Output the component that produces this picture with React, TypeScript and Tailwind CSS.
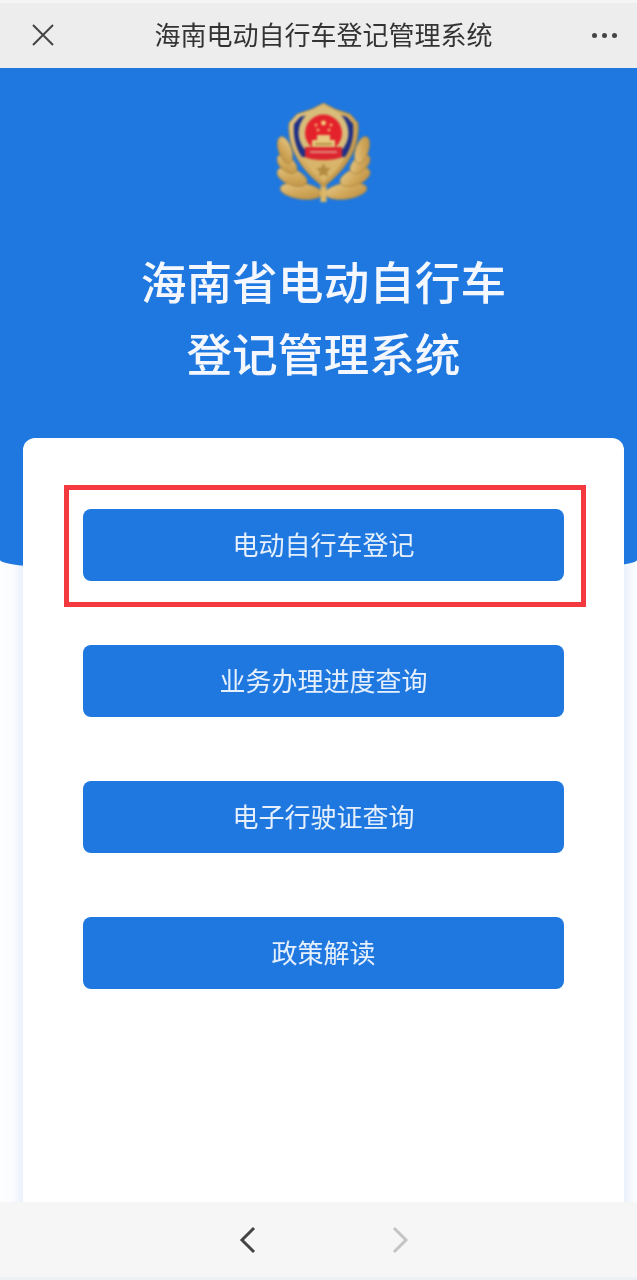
const CJK = "font-['Noto_Sans_CJK_SC','Noto_Sans',sans-serif]";

function Leaf({ x, y, rx, ry, r }: { x: number; y: number; rx: number; ry: number; r: number }) {
  return (
    <ellipse cx={x} cy={y} rx={rx} ry={ry} transform={`rotate(${r} ${x} ${y})`} fill="url(#gold)" stroke="#a5823a" strokeWidth="0.7" />
  );
}

function Emblem() {
  const left = [
    { x: 24, y: 88, rx: 21, ry: 8, r: 8 },
    { x: 15, y: 74, rx: 16, ry: 8, r: 22 },
    { x: 10, y: 61, rx: 12, ry: 7, r: 42 },
    { x: 8, y: 47, rx: 14, ry: 6.5, r: 72 },
  ];
  return (
    <svg width="94" height="100" viewBox="0 0 94 100" className="blur-[0.9px]">
      <defs>
        <linearGradient id="gold" x1="0" y1="0" x2="1" y2="1">
          <stop offset="0" stopColor="#e7cb8a" />
          <stop offset="0.55" stopColor="#d0a659" />
          <stop offset="1" stopColor="#bb8e42" />
        </linearGradient>
      </defs>
      {left.map((l, i) => (
        <Leaf key={i} {...l} />
      ))}
      {left.map((l, i) => (
        <Leaf key={i} x={93 - l.x} y={l.y} rx={l.rx} ry={l.ry} r={-l.r} />
      ))}
      <rect x="43.5" y="82" width="6" height="17" fill="#dcb766" />
      <path d="M46.5 0 L58 6 L73 11 L81 20 C83 46 68 68 46.5 84 C25 68 10 46 12 20 L20 11 L35 6Z" fill="url(#gold)" stroke="#9a7834" strokeWidth="0.8" />
      <path d="M46.5 5 L57 10 L70 14 L76 21 C77 32 75 44 68 54 L25 54 C18 44 16 32 17 21 L23 14 L36 10Z" fill="#1d2f86" />
      <path d="M25 54 L68 54 C63 64 55 72 46.5 79 C38 72 30 64 25 54Z" fill="#d8b56a" />
      <path d="M46.5 60 l2.2 4.5 5 .7 -3.6 3.5 .9 5 -4.5-2.4 -4.5 2.4 .9-5 -3.6-3.5 5-.7Z" fill="#b48a40" />
      <circle cx="46.5" cy="30" r="25" fill="#d8bd7a" />
      <circle cx="46.5" cy="30" r="18.5" fill="#e4222c" />
      <path d="M35 37 h23 v9 h-23z M40 32 h13 v5 h-13z" fill="#e6c97e" />
      <rect x="38" y="40" width="17" height="2" fill="#b58a42" />
      <circle cx="46.5" cy="20" r="2.4" fill="#f3d67c" />
      <circle cx="39" cy="22" r="1.3" fill="#f3d67c" />
      <circle cx="41" cy="27" r="1.3" fill="#f3d67c" />
      <circle cx="52" cy="27" r="1.3" fill="#f3d67c" />
      <circle cx="54" cy="22" r="1.3" fill="#f3d67c" />
      <path d="M28 44 L65 44 L65 54 C58 58 35 58 28 54Z" fill="#dc2530" />
      <path d="M33 49 h27" stroke="#e8b9a0" strokeWidth="1.4" />
    </svg>
  );
}

function ActionButton({ label }: { label: string }) {
  return (
    <button className="flex h-[72px] w-full items-center justify-center rounded-lg bg-[#1f78e0] pb-[4px] text-[26px] text-[#e6f0fc]">
      {label}
    </button>
  );
}

export default function App() {
  return (
    <div className={`${CJK} flex h-[1280px] w-[637px] flex-col overflow-hidden bg-white blur-[0.6px]`}>
      <header className="flex h-[68px] shrink-0 items-center justify-between border-t-[3px] border-[#f4f4f4] bg-[#ededed] pb-[2px] pl-[31px] pr-[20px]">
        <svg width="24" height="24" viewBox="0 0 24 24" stroke="#444" strokeWidth="2" fill="none">
          <path d="M2 2 L22 22 M22 2 L2 22" />
        </svg>
        <span className="mb-[2px] text-[26px] leading-none text-[#333]">海南电动自行车登记管理系统</span>
        <div className="mt-[2px] flex gap-[5px]">
          <i className="size-[5px] rounded-full bg-[#444]" />
          <i className="size-[5px] rounded-full bg-[#444]" />
          <i className="size-[5px] rounded-full bg-[#444]" />
        </div>
      </header>

      <main className="relative min-h-0 flex-1 bg-[linear-gradient(to_right,#fdfeff_0,#fbfcff_12px,#ebf1fb_22px,#ebf1fb_calc(100%-13px),#fdfeff_100%)]">
        <section className="flex h-[507px] flex-col items-center bg-[#1f78e0] pl-[10px] pt-[35px] [border-radius:0_0_50%_50%/0_0_15px_15px]">
          <Emblem />
          <h1 className="mt-[41px] text-center text-[45.7px] leading-[72px] font-medium text-[#f4f8fe]">
            海南省电动自行车
            <br />
            登记管理系统
          </h1>
        </section>

        <section className="relative ml-[23px] mr-[13px] -mt-[137px] h-[800px] rounded-t-xl bg-white px-[60px] pt-[71px]">
          <div className="flex flex-col gap-[64px]">
            <div className="relative">
              <ActionButton label="电动自行车登记" />
              <div className="absolute -left-[19px] -right-[22px] -top-[24px] -bottom-[26px] border-[5px] border-[#f43a3f]" />
            </div>
            <ActionButton label="业务办理进度查询" />
            <ActionButton label="电子行驶证查询" />
            <ActionButton label="政策解读" />
          </div>
        </section>
      </main>

      <footer className="relative flex h-[78px] shrink-0 items-center justify-center gap-[134px] border-b-[3px] border-[#edf0f5] bg-[#f6f6f6] pl-[10px]">
        <svg width="18" height="30" viewBox="0 0 18 30" fill="none" stroke="#444" strokeWidth="3">
          <path d="M15 3 L3 15 L15 27" />
        </svg>
        <svg width="18" height="30" viewBox="0 0 18 30" fill="none" stroke="#c4c4c4" strokeWidth="3">
          <path d="M3 3 L15 15 L3 27" />
        </svg>
      </footer>
    </div>
  );
}
